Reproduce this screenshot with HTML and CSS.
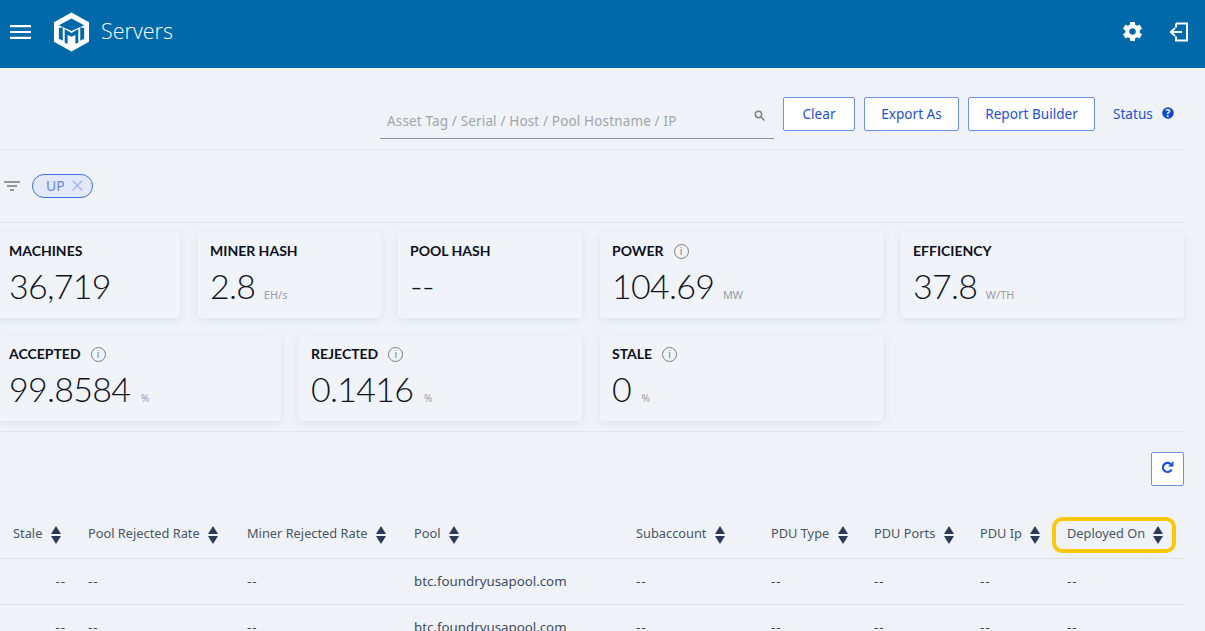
FILE: index.html
```html
<!DOCTYPE html>
<html lang="en">
<head>
	<meta charset="UTF-8">
	<title>Servers</title>
	<link rel="stylesheet" href="styles.css">
</head>
<body>
	<header class="topbar">
		<div class="topbar-left">
			<svg class="menu-icon" width="21" height="14" viewBox="0 0 21 14"><path d="M0 1.100h21M0 7h21M0 12.900h21" stroke="#fff" stroke-width="2.200"/></svg>
			<svg class="logo" width="35" height="40" viewBox="0 0 36 40">
				<path d="M18 0 36 10v20L18 40 0 30V10z" fill="#fff"/>
				<path d="M18 6 31 13 18 19 5 13z" fill="#0069aa"/>
				<path d="M5 16l4-1v14l-4-2zM31 16l-4-1v14l4-2z" fill="#0069aa"/>
				<path d="M11 17l7 4 7-4v14l-3 1v-9l-4 2-4-2v9l-3-1z" fill="#0069aa"/>
			</svg>
			<span class="page-title">Servers</span>
		</div>
		<div class="topbar-right">
			<svg width="23" height="23" viewBox="0 0 24 24"><path fill="#fff" d="M19.430 12.980c.04-.32.07-.64.07-.98s-.03-.66-.07-.98l2.110-1.650c.19-.15.24-.42.120-.64l-2-3.460c-.12-.22-.39-.3-.61-.22l-2.490 1c-.52-.4-1.080-.73-1.690-.98l-.38-2.650A.488.488 0 0 0 14 2h-4c-.25 0-.46.18-.49.42l-.38 2.650c-.61.25-1.170.59-1.690.98l-2.490-1c-.23-.09-.49 0-.61.22l-2 3.460c-.13.22-.07.49.12.64l2.110 1.650c-.04.32-.07.65-.07.98s.03.66.07.98l-2.110 1.650c-.19.15-.24.42-.12.64l2 3.460c.12.22.39.3.61.22l2.490-1c.52.4 1.080.73 1.690.98l.38 2.650c.03.24.24.42.49.42h4c.25 0 .46-.18.49-.42l.38-2.650c.61-.25 1.170-.59 1.690-.98l2.490 1c.23.09.49 0 .61-.22l2-3.460c.12-.22.07-.49-.12-.64l-2.110-1.650zM12 15.500c-1.930 0-3.500-1.570-3.500-3.500s1.570-3.500 3.500-3.500 3.500 1.570 3.500 3.500-1.570 3.500-3.500 3.500z"/></svg>
			<svg width="20" height="20" viewBox="0 0 20 20" fill="none" stroke="#fff" stroke-width="2"><path d="M7 1.500h11v17H7v-4M7 5.500v-4"/><path d="M13 10H2M6 6l-4 4 4 4"/></svg>
		</div>
	</header>

	<main class="content">
		<section class="toolbar">
			<div class="search">
				<span class="search-text">Asset Tag / Serial / Host / Pool Hostname / IP</span>
				<svg width="11" height="11" viewBox="0 0 11 11" fill="none" stroke="#7d8288" stroke-width="1.500"><circle cx="4.500" cy="4.500" r="3.200"/><path d="M7 7l3.500 3.500"/></svg>
			</div>
			<button class="btn btn-clear">Clear</button>
			<button class="btn btn-export">Export As</button>
			<button class="btn btn-report">Report Builder</button>
			<div class="status">Status
				<svg width="12" height="12" viewBox="0 0 12 12"><circle cx="6" cy="6" r="5.800" fill="#0f4ad0"/><text x="6" y="9.600" text-anchor="middle" class="help-mark">?</text></svg>
			</div>
		</section>

		<section class="filters">
			<svg width="16" height="10" viewBox="0 0 16 10"><path d="M0 1h16M3 5h10M6 9h4" stroke="#75797e" stroke-width="1.500"/></svg>
			<span class="chip">UP
				<svg width="11" height="11" viewBox="0 0 11 11"><path d="M.8.8l9.400 9.400M10.200.8.800 10.200" stroke="#a3b5ec" stroke-width="1.400"/></svg>
			</span>
		</section>

		<section class="stats">
			<div class="card-row">
				<div class="card w183">
					<div class="card-title">MACHINES</div>
					<div class="card-value">36,719</div>
				</div>
				<div class="card w183">
					<div class="card-title">MINER HASH</div>
					<div class="card-value">2.8 <small>EH/s</small></div>
				</div>
				<div class="card w184 tuck">
					<div class="card-title">POOL HASH</div>
					<div class="card-value">--</div>
				</div>
				<div class="card w283">
					<div class="card-title">POWER <i class="info">i</i></div>
					<div class="card-value">104.69 <small>MW</small></div>
				</div>
				<div class="card w283">
					<div class="card-title">EFFICIENCY</div>
					<div class="card-value">37.8 <small>W/TH</small></div>
				</div>
			</div>
			<div class="card-row">
				<div class="card w284">
					<div class="card-title">ACCEPTED <i class="info">i</i></div>
					<div class="card-value">99.8584 <small class="pct">%</small></div>
				</div>
				<div class="card w283">
					<div class="card-title">REJECTED <i class="info">i</i></div>
					<div class="card-value">0.1416 <small class="pct">%</small></div>
				</div>
				<div class="card w283">
					<div class="card-title">STALE <i class="info">i</i></div>
					<div class="card-value">0 <small class="pct">%</small></div>
				</div>
			</div>
		</section>

		<section class="table-tools">
			<button class="btn-refresh">
				<svg width="13" height="13" viewBox="0 0 12 12" fill="none" stroke="#1550d8" stroke-width="2"><path d="M9.800 7.800A4.200 4.200 0 1 1 8.800 2.800"/><path d="M11.500 0v5H6.500z" fill="#1550d8" stroke="none"/></svg>
			</button>
		</section>

		<table class="servers">
			<colgroup>
				<col class="c-stale"><col class="c-prr"><col class="c-mrr"><col class="c-pool"><col class="c-sub"><col class="c-type"><col class="c-ports"><col class="c-ip"><col class="c-dep">
			</colgroup>
			<thead>
				<tr>
					<th>Stale <i class="sort"></i></th>
					<th>Pool Rejected Rate <i class="sort"></i></th>
					<th>Miner Rejected Rate <i class="sort"></i></th>
					<th>Pool <i class="sort"></i></th>
					<th>Subaccount <i class="sort"></i></th>
					<th>PDU Type <i class="sort"></i></th>
					<th>PDU Ports <i class="sort"></i></th>
					<th>PDU Ip <i class="sort"></i></th>
					<th class="marked">Deployed On <i class="sort"></i><span class="highlight"></span></th>
				</tr>
			</thead>
			<tbody>
				<tr>
					<td class="num">--</td><td>--</td><td>--</td><td class="host">btc.foundryusapool.com</td><td>--</td><td>--</td><td>--</td><td>--</td><td>--</td>
				</tr>
				<tr>
					<td class="num">--</td><td>--</td><td>--</td><td class="host">btc.foundryusapool.com</td><td>--</td><td>--</td><td>--</td><td>--</td><td>--</td>
				</tr>
			</tbody>
		</table>
	</main>
</body>
</html>
```

FILE: styles.css
```css
* {
	box-sizing: border-box;
}
html, body {
	height: 100%;
}
body {
	margin: 0;
	overflow: hidden;
	background: #eff3f8;
	font-family: "Noto Sans", "Liberation Sans", sans-serif;
	color: #3f4a5f;
}

/* top bar */
.topbar {
	height: 68px;
	background: #0069aa;
	display: flex;
	align-items: center;
	justify-content: space-between;
	padding: 0 16px 5px 10px;
}
.topbar-left {
	display: flex;
	align-items: center;
}
.menu-icon {
	margin-right: 23px;
}
.logo {
	margin-right: 12px;
}
.page-title {
	font-family: "Open Sans", sans-serif;
	font-weight: 300;
	font-size: 21.500px;
	color: #fff;
	margin-top: -2px;
}
.topbar-right {
	display: flex;
	align-items: center;
	gap: 25px;
}

/* everything below the bar */
.content {
	width: 1184px;
}
.toolbar {
	height: 82px;
	border-bottom: 1px solid #e3e6ea;
	display: flex;
	align-items: flex-start;
	padding: 29px 0 0 380px;
}
.search {
	width: 394px;
	height: 42px;
	border-bottom: 1px solid #8f9498;
	display: flex;
	align-items: center;
	justify-content: space-between;
	padding: 8px 9px 0 7px;
	margin-right: 9px;
}
.search svg {
	margin-top: -12px;
}
.search-text {
	font-size: 13.500px;
	letter-spacing: 0.15px;
	color: #a0a5ad;
	margin-top: -2px;
}
.btn {
	height: 34px;
	background: #fff;
	border: 1px solid #6d8fe8;
	border-radius: 2px;
	color: #1f50d6;
	font-family: inherit;
	font-size: 13.600px;
	padding: 0 0 2px;
	margin-right: 9px;
}
.btn-clear {
	width: 72px;
}
.btn-export {
	width: 95px;
}
.btn-report {
	width: 127px;
	margin-right: 18px;
}
.status {
	display: flex;
	align-items: center;
	gap: 9px;
	height: 32px;
	font-size: 13.600px;
	color: #1f50d6;
}
.help-mark {
	font-size: 10px;
	font-weight: bold;
	fill: #fff;
}
.filters {
	height: 73px;
	border-bottom: 1px solid #e3e6ea;
	display: flex;
	align-items: center;
	gap: 12px;
	padding: 0 0 0 4px;
}
.chip {
	display: flex;
	align-items: center;
	gap: 7px;
	height: 24px;
	padding: 0 9px 2px 13px;
	background: #e3e9fa;
	border: 1px solid #3f6fe0;
	border-radius: 12px;
	font-size: 14px;
	color: #6d86e6;
}

/* stat cards */
.stats {
	height: 209px;
	border-bottom: 1px solid #e3e6ea;
	padding-top: 9px;
	margin-left: -3px;
	display: flex;
	flex-direction: column;
	gap: 17px;
}
.card-row {
	display: flex;
	gap: 18px;
}
.card {
	height: 86px;
	background: #f0f4f9;
	border-radius: 4px;
	box-shadow: 0 2px 8px rgba(120, 135, 170, 0.16);
	padding: 10px 12px;
	flex: none;
}
.tuck {
	margin-left: -1px;
}
.w183 {
	width: 183px;
}
.w184 {
	width: 184px;
}
.w283 {
	width: 283px;
}
.w284 {
	width: 284px;
}
.card-title {
	display: flex;
	align-items: center;
	gap: 10px;
	font-family: "Lato", sans-serif;
	font-weight: 700;
	font-size: 14px;
	line-height: 18px;
	color: #0c0f1c;
}
.info {
	width: 15px;
	height: 15px;
	border: 1.500px solid #7a7d82;
	border-radius: 50%;
	font-family: "Noto Sans", sans-serif;
	font-style: normal;
	font-weight: normal;
	font-size: 10px;
	line-height: 12px;
	text-align: center;
	color: #7a7d82;
}
.card-value {
	font-family: "Lato", sans-serif;
	font-weight: 300;
	font-size: 34px;
	letter-spacing: -0.7px;
	line-height: 42px;
	color: #10131f;
	margin-top: 5px;
}
.card-value small {
	font-family: "Noto Sans", sans-serif;
	font-weight: 400;
	font-size: 11px;
	letter-spacing: 0;
	color: #9a9da6;
}
.card-value .pct {
	font-size: 10px;
	margin-left: 2px;
}

/* table */
.table-tools {
	height: 79px;
	display: flex;
	justify-content: flex-end;
	padding-top: 20px;
}
.btn-refresh {
	width: 33px;
	height: 34px;
	background: #fff;
	border: 1px solid #6d8fe8;
	border-radius: 2px;
	padding: 0;
}
.servers {
	width: 1184px;
	table-layout: fixed;
	border-collapse: collapse;
	font-size: 12.800px;
}
.c-stale {
	width: 88px;
}
.c-prr {
	width: 159px;
}
.c-mrr {
	width: 167px;
}
.c-pool {
	width: 222px;
}
.c-sub {
	width: 135px;
}
.c-type {
	width: 103px;
}
.c-ports {
	width: 106px;
}
.c-ip {
	width: 87px;
}
.c-dep {
	width: 117px;
}
.servers th {
	height: 47px;
	font-weight: 400;
	text-align: left;
	padding: 0;
	color: #4a5364;
	white-space: nowrap;
	border-bottom: 1px solid #dfe2e6;
}
.servers th:first-child {
	padding-left: 13px;
}
.servers td {
	height: 46px;
	padding: 0;
	font-size: 13.300px;
	letter-spacing: 1px;
	color: #3f4a5f;
	border-bottom: 1px solid #dfe2e6;
}
.servers td.host {
	letter-spacing: 0;
}
.servers td.num {
	text-align: right;
	padding-right: 22px;
}
.sort {
	display: inline-block;
	position: relative;
	width: 11px;
	height: 18px;
	margin-left: 5px;
	vertical-align: middle;
}
.sort::before, .sort::after {
	content: "";
	position: absolute;
	left: 0;
	border-left: 5.500px solid transparent;
	border-right: 5.500px solid transparent;
}
.sort::before {
	top: 0;
	border-bottom: 8px solid #2c3a57;
}
.sort::after {
	bottom: 0;
	border-top: 8px solid #2c3a57;
}
.marked {
	position: relative;
}
.highlight {
	position: absolute;
	left: -15px;
	top: 6px;
	width: 124px;
	height: 36px;
	border: 4px solid #fdc70c;
	border-radius: 10px;
}
```
